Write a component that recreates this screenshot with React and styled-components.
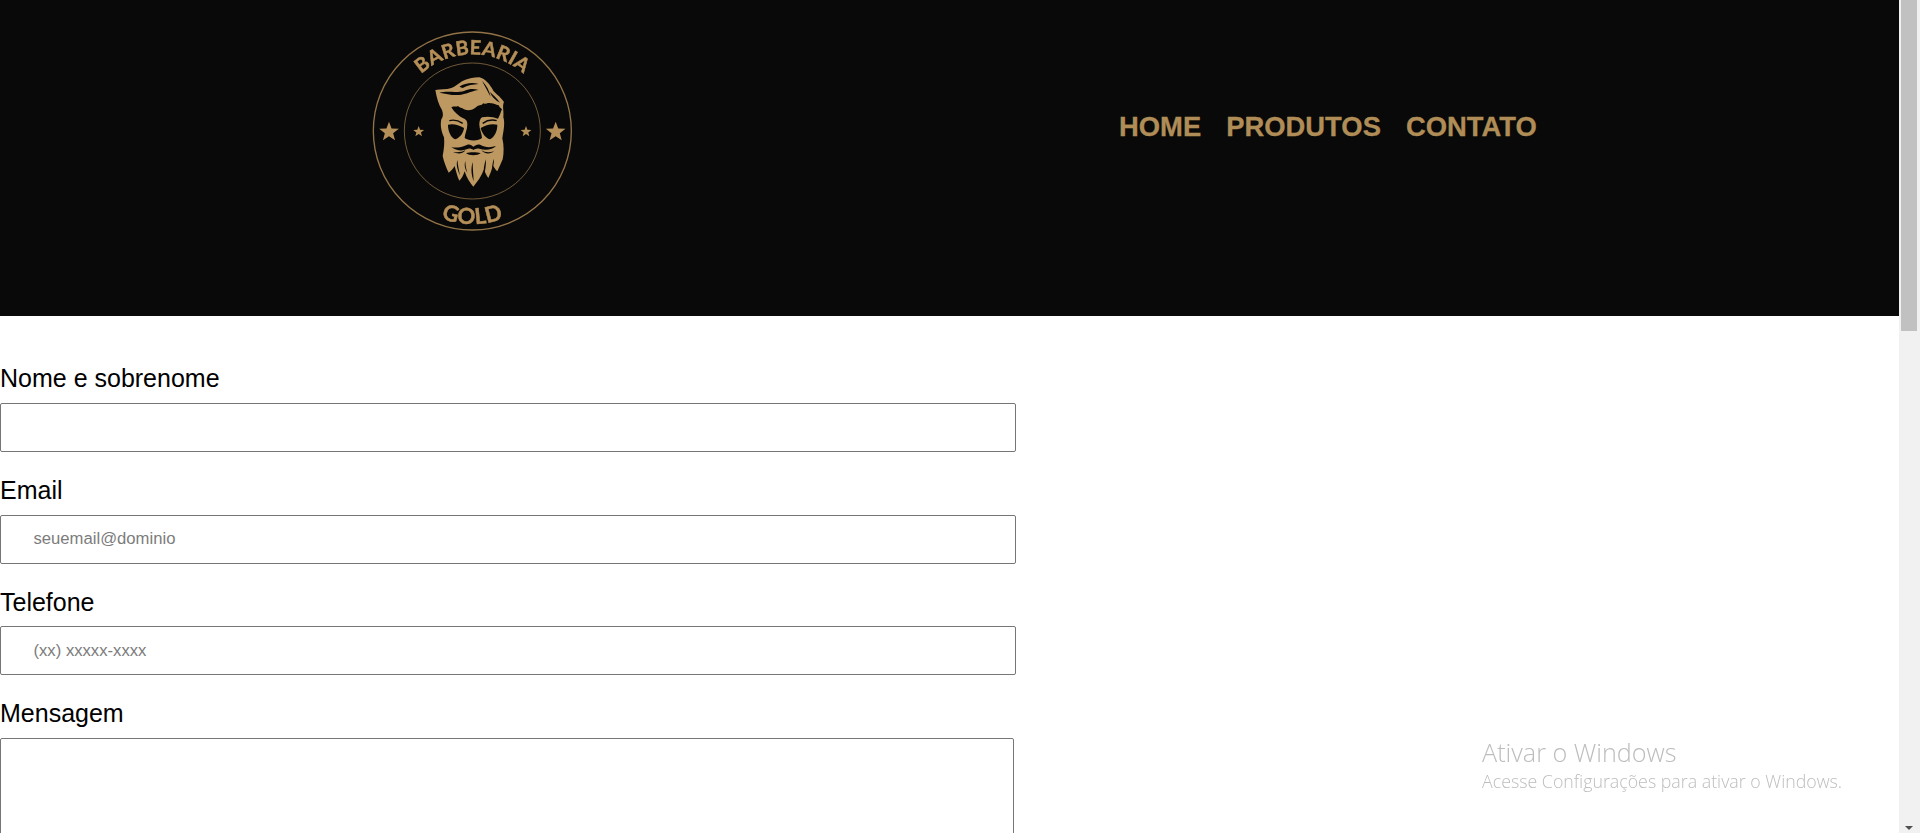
import React from "react";
import styled, { createGlobalStyle } from "styled-components";

const Global = createGlobalStyle`
  html, body { margin: 0; padding: 0; height: 100%; overflow: hidden; background: #fff; }
  * { box-sizing: border-box; }
`;

const Page = styled.div`
  display: flex;
  height: 100vh;
  overflow: hidden;
  font-family: "Liberation Sans", Arial, sans-serif;
  color: #000;
`;

const Content = styled.div`
  flex: 1;
  min-width: 0;
`;

const Header = styled.header`
  display: flex;
  align-items: flex-start;
  height: 316px;
  padding: 15px 0 0 350px;
  background: #090909;
`;

const Logo = styled.svg`
  flex: none;
  width: 240px;
  height: 230px;
  filter: blur(0.4px);
`;

const Nav = styled.nav`
  display: flex;
  gap: 25px;
  margin: 96px 0 0 529px;
`;

const NavLink = styled.a`
  font-size: 27.4px;
  line-height: 32px;
  font-weight: 700;
  color: #b08d57;
  -webkit-text-stroke: 0.3px #b08d57;
`;

const Form = styled.form`
  display: flex;
  flex-direction: column;
  padding-top: 48.33px;
`;

const Field = styled.div`
  display: flex;
  flex-direction: column;
  margin-bottom: 24px;
`;

const Label = styled.label`
  font-size: 25px;
  line-height: 28.67px;
  margin-bottom: 10px;
`;

const Input = styled.input`
  width: 1016px;
  height: 49px;
  padding: 0 0 0 32.5px;
  border: 1px solid #767676;
  border-radius: 2px;
  background: #fff;
  font: 16.67px "Liberation Sans", Arial, sans-serif;
  outline: none;
  &::placeholder { color: #7c7c7c; opacity: 1; }
`;

const TextArea = styled.textarea`
  display: block;
  width: 1014px;
  height: 180px;
  border: 1px solid #767676;
  border-radius: 2px;
  background: #fff;
  resize: none;
  outline: none;
`;

const Scrollbar = styled.aside`
  flex: none;
  position: relative;
  width: 21px;
  height: 100%;
  padding: 0 3px 0 2px;
  background: #f1f1f1;
`;

const Thumb = styled.div`
  height: 331px;
  background: #c1c1c1;
`;

const ArrowDown = styled.div`
  position: absolute;
  left: 6px;
  bottom: 3px;
  width: 0;
  height: 0;
  border-left: 4px solid transparent;
  border-right: 4px solid transparent;
  border-top: 4px solid #505050;
`;

const Watermark = styled.div`
  position: fixed;
  left: 1482px;
  top: 735px;
  color: #bdbdbd;
  font-family: "Open Sans", "Noto Sans", sans-serif;
  font-weight: 300;
  pointer-events: none;
`;

const WatermarkTitle = styled.div`
  font-size: 25.2px;
  line-height: 34px;
`;

const WatermarkText = styled.div`
  font-size: 17.8px;
  line-height: 25px;
`;

const GOLD = "#b58f58";
const BG = "#090909";

function starPoints(cx, cy, r) {
  const pts = [];
  for (let i = 0; i < 10; i++) {
    const rad = i % 2 === 0 ? r : r * 0.42;
    const a = -Math.PI / 2 + (i * Math.PI) / 5;
    pts.push(`${(cx + rad * Math.cos(a)).toFixed(1)},${(cy + rad * Math.sin(a)).toFixed(1)}`);
  }
  return pts.join(" ");
}

function BarberLogo() {
  return (
    <Logo viewBox="0 0 720 690" aria-label="Barbearia Gold">
      <defs>
        <path id="arcTop" d="M 137 348 A 230 230 0 0 1 597 348" />
        <path id="arcBottom" d="M 88 348 A 279 279 0 0 0 646 348" />
      </defs>
      <circle cx="367" cy="348" r="297" fill="none" stroke={GOLD} strokeWidth="4" opacity="0.8" />
      <circle cx="367" cy="348" r="204" fill="none" stroke={GOLD} strokeWidth="3" opacity="0.6" />
      <text fontFamily="Lato, 'Open Sans', sans-serif" fontWeight="700" fontSize="59" fill={GOLD} stroke={GOLD} strokeWidth="1.5" textAnchor="middle" letterSpacing="1">
        <textPath href="#arcTop" startOffset="50%">BARBEARIA</textPath>
      </text>
      <text fontFamily="Lato, 'Open Sans', sans-serif" fontWeight="700" fontSize="66" fill={GOLD} stroke={GOLD} strokeWidth="1.5" textAnchor="middle" letterSpacing="1">
        <textPath href="#arcBottom" startOffset="50%">GOLD</textPath>
      </text>
      <polygon points={starPoints(117, 351, 31)} fill={GOLD} />
      <polygon points={starPoints(617, 351, 31)} fill={GOLD} />
      <polygon points={starPoints(206, 350, 17)} fill={GOLD} />
      <polygon points={starPoints(528, 350, 17)} fill={GOLD} />
      <g transform="translate(210 165)">
        <path
          fill="#bd9861"
          d="M46 60 C62 56 78 60 94 54 C106 50 114 42 126 34 C142 26 160 22 178 22 C196 26 210 44 220 62 C226 70 240 78 252 96 C246 108 252 122 250 142 C256 160 250 185 247 205 C252 225 252 250 248 268 C242 282 238 292 232 304 C226 298 222 292 218 284 C216 300 210 312 205 324 C199 316 195 308 192 298 C185 318 172 336 160 350 C150 338 140 324 134 304 C130 316 124 328 118 332 C112 320 108 304 104 288 C98 298 92 304 86 308 C78 292 72 276 68 258 C72 238 74 220 72 202 C64 185 60 165 64 148 C70 140 70 132 66 120 C56 104 50 84 46 60 Z"
        />
        <path fill={BG} d="M58 68 C82 62 112 70 134 62 C148 56 162 56 176 60 C158 62 146 70 124 74 C102 78 80 72 58 68 Z" />
        <path fill={BG} d="M118 50 C134 40 156 36 176 42 C160 43 142 46 128 54 Z" />
        <path fill={BG} d="M186 32 C200 46 208 62 212 80 C204 66 196 50 186 32 Z" />
        <path fill={BG} d="M210 66 C220 76 232 86 240 98 C228 92 216 82 210 66 Z" />
        <path fill={BG} d="M94 112 C100 106 108 112 114 108 C118 114 126 112 132 118 C146 124 158 120 168 112 C176 104 184 108 190 100 C196 104 204 96 212 100 C218 98 226 104 236 106 C238 112 242 114 246 118 C242 126 240 136 234 146 C220 140 202 138 186 142 C180 146 178 154 178 164 C178 176 186 192 186 204 C176 214 146 214 134 204 C134 192 142 178 142 164 C142 152 138 148 128 144 C116 138 104 128 94 112 Z" />
        <path fill={BG} d="M84 164 C98 160 116 164 132 174 C130 188 122 202 106 208 C94 204 84 186 84 164 Z" />
        <path fill={BG} d="M182 174 C198 164 216 160 232 164 C232 184 224 200 210 208 C196 204 186 190 182 174 Z" />
        <path fill="none" stroke={BG} strokeWidth="4" d="M88 152 C102 148 116 152 128 160" />
        <path fill="none" stroke={BG} strokeWidth="4" d="M188 160 C202 150 216 148 230 152" />
        <path fill={BG} d="M94 232 C110 234 126 232 142 224 C150 222 156 226 160 230 C166 226 172 222 180 224 C194 232 210 234 228 228 C216 240 196 242 178 236 C170 234 164 238 160 240 C154 236 148 234 140 238 C126 244 108 242 94 232 Z" />
        <path fill={BG} d="M100 246 C114 248 128 246 136 240 C132 250 114 254 100 246 Z" />
        <path fill={BG} d="M184 240 C194 248 208 248 222 244 C210 254 192 252 184 240 Z" />
        <path fill={BG} d="M138 250 C150 246 170 246 182 250 C172 258 148 258 138 250 Z" />
        <path fill={BG} d="M112 270 C114 285 116 298 120 316 C112 298 108 284 112 270 Z" />
        <path fill={BG} d="M136 272 C136 286 138 296 142 308 C134 296 132 284 136 272 Z" />
        <path fill={BG} d="M158 276 C158 296 160 312 161 334 C154 314 152 296 158 276 Z" />
        <path fill={BG} d="M198 268 C198 288 196 300 192 316 C190 298 192 284 198 268 Z" />
        <path fill={BG} d="M222 266 C222 278 220 288 218 296 C216 286 218 276 222 266 Z" />
      </g>
    </Logo>
  );
}

export default function App() {
  return (
    <Page>
      <Global />
      <Content>
        <Header>
          <BarberLogo />
          <Nav>
            <NavLink>HOME</NavLink>
            <NavLink>PRODUTOS</NavLink>
            <NavLink>CONTATO</NavLink>
          </Nav>
        </Header>
        <Form>
          <Field>
            <Label>Nome e sobrenome</Label>
            <Input type="text" />
          </Field>
          <Field>
            <Label>Email</Label>
            <Input type="email" placeholder="seuemail@dominio" />
          </Field>
          <Field>
            <Label>Telefone</Label>
            <Input type="tel" placeholder="(xx) xxxxx-xxxx" />
          </Field>
          <Field>
            <Label>Mensagem</Label>
            <TextArea />
          </Field>
        </Form>
      </Content>
      <Scrollbar>
        <Thumb />
        <ArrowDown />
      </Scrollbar>
      <Watermark>
        <WatermarkTitle>Ativar o Windows</WatermarkTitle>
        <WatermarkText>Acesse Configurações para ativar o Windows.</WatermarkText>
      </Watermark>
    </Page>
  );
}
